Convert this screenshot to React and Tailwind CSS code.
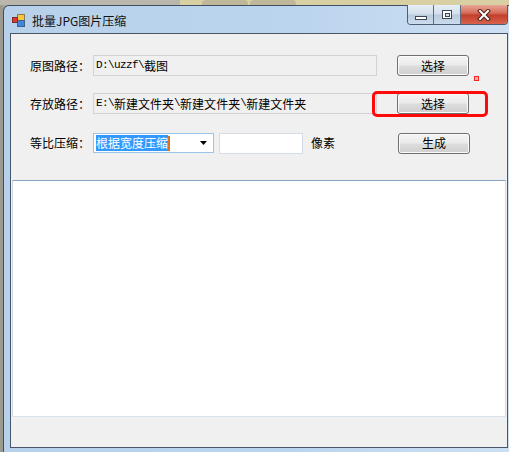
import React from 'react'

function PathText({ value }) {
  return value.split('').map((ch, i) =>
    /[\x00-\x7f]/.test(ch) ? (
      <span
        key={i}
        className="inline-block w-[6px] overflow-visible font-['Liberation_Mono',monospace] text-[11px] tracking-[-0.6px]"
      >
        {ch}
      </span>
    ) : (
      <span key={i}>{ch}</span>
    ),
  )
}

function WinButton({ children }) {
  return (
    <button
      type="button"
      className="flex h-[21px] w-[72px] shrink-0 items-center justify-center rounded-[3px] border border-[#707070] bg-[linear-gradient(#f4f4f4_0%,#ebebeb_48%,#dddddd_52%,#cfcfcf_100%)] text-[12px] leading-none text-black shadow-[inset_0_0_0_1px_#fbfbfb]"
    >
      {children}
    </button>
  )
}

function AppIcon() {
  return (
    <svg width="14" height="14" viewBox="0 0 14 14" className="shrink-0">
      <rect x="5.5" y="0.5" width="7" height="6" fill="#f6c640" stroke="#8a7a50" />
      <rect x="5.5" y="6.5" width="7" height="6" fill="#3f86e0" stroke="#4a5e80" />
      <rect x="0.5" y="3.5" width="5" height="5" fill="#e03828" stroke="#7a3030" />
    </svg>
  )
}

function TitleButtons() {
  return (
    <div className="absolute left-[403px] top-[-1px] flex h-[20px] overflow-hidden rounded-b-[4px] border border-t-0 border-[#4f5d72]">
      <div className="flex w-[26px] items-center justify-center border-r border-[#5d6b80] bg-[linear-gradient(#e6eef6_0%,#d4e0ec_45%,#b9cbdd_55%,#cddced_100%)]">
        <div className="mt-[6px] h-[4px] w-[12px] border border-[#3c4656] bg-white" />
      </div>
      <div className="flex w-[27px] items-center justify-center border-r border-[#5d6b80] bg-[linear-gradient(#e6eef6_0%,#d4e0ec_45%,#b9cbdd_55%,#cddced_100%)]">
        <div className="flex h-[9px] w-[10px] items-center justify-center border border-[#3c4656] bg-white">
          <div className="h-[4px] w-[5px] border border-[#3c4656] bg-[#d6e2ee]" />
        </div>
      </div>
      <div className="flex w-[46px] items-center justify-center bg-[linear-gradient(#e9a696_0%,#d7705c_40%,#c3402c_55%,#d8634e_100%)]">
        <svg width="14" height="12" viewBox="0 0 14 12">
          <path d="M3 2 L11 10 M11 2 L3 10" stroke="#4a2018" strokeWidth="4" strokeLinecap="square" />
          <path d="M3 2 L11 10 M11 2 L3 10" stroke="#ffffff" strokeWidth="2" strokeLinecap="square" />
        </svg>
      </div>
    </div>
  )
}

export default function App() {
  return (
    <div className="relative h-[452px] w-[509px] overflow-hidden bg-[#a9a69a] font-['Noto_Sans_CJK_SC','Noto_Sans',sans-serif] text-[12px] text-black">
      <div className="flex h-[5px]">
        <div className="w-[180px] bg-[#b9b6ac]" />
        <div className="flex flex-1 gap-[2px] bg-[#d8cfa2] px-[22px]">
          <div className="w-[46px] rounded-t-[4px] bg-[#bfb79a]" />
          <div className="w-[46px] rounded-t-[4px] bg-[#bfb79a]" />
        </div>
      </div>

      <div className="flex">
        <div className="w-[3px] shrink-0 bg-[#9c9a8e]" />
        <div className="relative w-[512px] shrink-0 rounded-t-[6px] border border-b-0 border-[#3f4e63] bg-[linear-gradient(90deg,#b7d1ea_0%,#bcd5ee_60%,#cde0f2_100%)]">
          <div className="flex h-[27px] items-center gap-[6px] pl-[8px] pt-[2px]">
            <AppIcon />
            <span className="text-[12px] leading-none text-[#111]">批量JPG图片压缩</span>
          </div>
          <TitleButtons />

          <div className="px-[6px]">
            <div className="relative flex h-[415px] flex-col border border-[#47566a] bg-[#f0f0f0]">
              <div className="mt-[21px] flex h-[21px] items-center">
                <span className="ml-[19px] w-[63px]">原图路径：</span>
                <div className="flex h-[21px] w-[284px] items-center border border-[#d0d4d9] bg-[#f0f0f0] pl-[2px] leading-none">
                  <PathText value="D:\uzzf\截图" />
                </div>
                <div className="ml-[20px]">
                  <WinButton>选择</WinButton>
                </div>
              </div>

              <div className="mt-[17px] flex h-[21px] items-center">
                <span className="ml-[19px] w-[63px]">存放路径：</span>
                <div className="flex h-[21px] w-[284px] items-center border border-[#d0d4d9] bg-[#f0f0f0] pl-[2px] leading-none">
                  <PathText value="E:\新建文件夹\新建文件夹\新建文件夹" />
                </div>
                <div className="ml-[20px]">
                  <WinButton>选择</WinButton>
                </div>
              </div>

              <div className="mt-[18px] flex h-[22px] items-center">
                <span className="ml-[19px] w-[63px]">等比压缩：</span>
                <div className="flex h-[20px] w-[121px] items-center border border-[#9cc3e8] bg-white pl-[2px]">
                  <span className="flex h-[16px] items-center bg-[#3399ff] leading-none text-white">根据宽度压缩</span>
                  <span className="h-[15px] w-[2px] bg-[#e07020]" />
                  <svg width="8" height="4" viewBox="0 0 8 4" className="ml-auto mr-[5px]">
                    <path d="M0 0 H7 L3.5 4 Z" fill="#000" />
                  </svg>
                </div>
                <div className="ml-[5px] h-[21px] w-[84px] border border-[#d5dce3] bg-white" />
                <span className="ml-[8px] w-[87px]">像素</span>
                <WinButton>生成</WinButton>
              </div>

              <div className="mx-[1px] mt-[26px] h-[237px] border border-t-[#86a3bf] border-x-[#cfdbe6] border-b-[#dae3ec] bg-white" />

              <div className="absolute left-[361px] top-[57px] h-[26px] w-[116px] rounded-[5px] border-[3px] border-[#ff0a0a]" />
              <div className="absolute left-[463px] top-[42px] h-[5px] w-[5px] border border-[#ff2020] bg-[#ffb0b0]" />
            </div>
            <div className="h-[6px]" />
          </div>
        </div>
      </div>
    </div>
  )
}
